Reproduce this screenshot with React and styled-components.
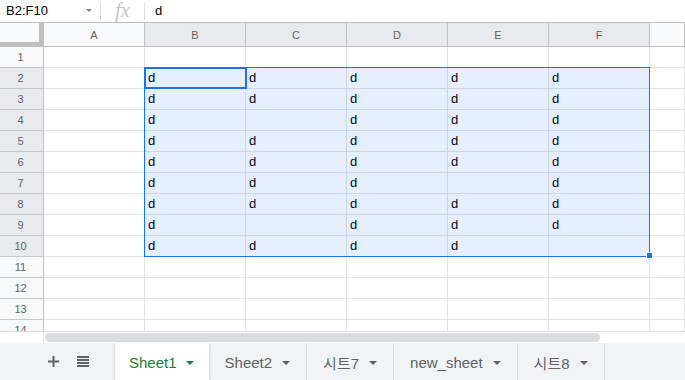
import React from "react";
import styled, { createGlobalStyle } from "styled-components";

const GlobalStyle = createGlobalStyle`
  html, body { margin: 0; padding: 0; background: #fff; }
  body { font-family: "Liberation Sans", Arial, sans-serif; }
  * { box-sizing: border-box; }
`;

const Page = styled.div`
  width: 685px;
  height: 380px;
  overflow: hidden;
  display: flex;
  flex-direction: column;
  background: #fff;
`;

const FormulaBar = styled.div`
  height: 23px;
  flex: none;
  display: flex;
  align-items: center;
  border-bottom: 1px solid #c0c0c0;
  font-size: 13px;
  color: #000;
`;

const NameBox = styled.div`
  width: 100px;
  height: 100%;
  display: flex;
  align-items: center;
  justify-content: space-between;
  padding: 0 8px 1px 6px;
`;

const Caret = styled.span`
  width: 0;
  height: 0;
  border-left: 3px solid transparent;
  border-right: 3px solid transparent;
  border-top: 3px solid #80868b;
`;

const Divider = styled.div`
  width: 1px;
  height: 17px;
  background: #dadce0;
  flex: none;
`;

const Fx = styled.div`
  width: 43px;
  text-align: center;
  font-family: "Liberation Serif", "Times New Roman", serif;
  font-style: italic;
  font-size: 20px;
  color: #c4c7c5;
  line-height: 20px;
  padding-bottom: 3px;
`;

const FormulaText = styled.div`
  padding-left: 10px;
  padding-bottom: 1px;
`;

const Grid = styled.div`
  position: relative;
  flex: none;
`;

const HeaderRow = styled.div`
  display: flex;
  height: 24px;
`;

const Corner = styled.div`
  width: 44px;
  flex: none;
  background: #f8f9fa;
  border-right: 5px solid #c0c0c0;
  border-bottom: 5px solid #c0c0c0;
`;

const ColHeader = styled.div`
  width: ${(p) => (p.$fill ? "auto" : "101px")};
  flex: ${(p) => (p.$fill ? "1" : "none")};
  display: flex;
  align-items: center;
  justify-content: center;
  font-size: 11px;
  color: #5f6368;
  background: ${(p) => (p.$selected ? "#e8eaed" : "#f8f9fa")};
  border-right: 1px solid #c0c0c0;
  border-bottom: 1px solid #c0c0c0;
`;

const Body = styled.div`
  height: 284px;
  overflow: hidden;
`;

const Row = styled.div`
  display: flex;
  height: 21px;
`;

const RowHeader = styled.div`
  width: 44px;
  flex: none;
  display: flex;
  align-items: center;
  justify-content: center;
  padding-right: 2px;
  font-size: 11px;
  color: #5f6368;
  background: ${(p) => (p.$selected ? "#e8eaed" : "#f8f9fa")};
  border-right: 1px solid #c0c0c0;
  border-bottom: 1px solid #c4c7c5;
`;

const Cell = styled.div`
  width: ${(p) => (p.$fill ? "auto" : "101px")};
  flex: ${(p) => (p.$fill ? "1" : "none")};
  padding: 0 3px;
  font-size: 13px;
  line-height: 20px;
  color: #000;
  border-right: 1px solid #e2e3e3;
  border-bottom: 1px solid #e2e3e3;
`;

const Selection = styled.div`
  position: absolute;
  left: 144px;
  top: 44px;
  width: 506px;
  height: 190px;
  border: 1px solid #1a73e8;
  background: rgba(14, 101, 235, 0.1);
  pointer-events: none;
`;

const ActiveCell = styled.div`
  position: absolute;
  left: 144px;
  top: 44px;
  width: 103px;
  height: 22px;
  border: 2px solid #1a73e8;
  pointer-events: none;
`;

const FillHandle = styled.div`
  position: absolute;
  left: 646px;
  top: 229px;
  width: 7px;
  height: 7px;
  background: #1a73e8;
  border: 1px solid #fff;
`;

const ScrollArea = styled.div`
  height: 12px;
  flex: none;
  display: flex;
  border-top: 1px solid #dadce0;
`;

const ScrollCorner = styled.div`
  width: 44px;
  flex: none;
  border-right: 1px solid #e0e0e0;
`;

const Thumb = styled.div`
  margin-top: 1px;
  margin-left: 1px;
  width: 555px;
  height: 9px;
  border-radius: 5px;
  background: #dadce0;
`;

const TabBar = styled.div`
  flex: 1;
  display: flex;
  background: #f1f3f4;
`;

const Tools = styled.div`
  width: 115px;
  flex: none;
  display: flex;
  align-items: center;
  padding-left: 48px;
  gap: 18px;
`;

const IconButton = styled.div`
  display: flex;
  align-items: center;
  color: #5f6368;
`;

const Tab = styled.div`
  display: flex;
  align-items: center;
  gap: ${(p) => (p.$active ? "9px" : "10px")};
  padding: ${(p) => (p.$active ? "1px 14px 0 14px" : "1px 16px 0 16px")};
  font-family: "Liberation Sans", "Noto Sans CJK KR", Arial, sans-serif;
  font-size: 15px;
  color: ${(p) => (p.$active ? "#188038" : "#5f6368")};
  background: ${(p) => (p.$active ? "#fff" : "transparent")};
  box-shadow: ${(p) => (p.$active ? "0 1px 3px rgba(60,64,67,0.3)" : "none")};
  border-right: 1px solid ${(p) => (p.$active ? "transparent" : "#dadce0")};
`;

const TabArrow = styled.span`
  width: 0;
  height: 0;
  border-left: 4px solid transparent;
  border-right: 4px solid transparent;
  border-top: 4px solid ${(p) => (p.$active ? "#188038" : "#5f6368")};
  margin-top: 1px;
`;

const cols = ["A", "B", "C", "D", "E", "F"];
const data = [
  ["", "", "", "", "", ""],
  ["", "d", "d", "d", "d", "d"],
  ["", "d", "d", "d", "d", "d"],
  ["", "d", "", "d", "d", "d"],
  ["", "d", "d", "d", "d", "d"],
  ["", "d", "d", "d", "d", "d"],
  ["", "d", "d", "d", "", "d"],
  ["", "d", "d", "d", "d", "d"],
  ["", "d", "", "d", "d", "d"],
  ["", "d", "d", "d", "d", ""],
  ["", "", "", "", "", ""],
  ["", "", "", "", "", ""],
  ["", "", "", "", "", ""],
  ["", "", "", "", "", ""],
];

const tabs = [
  { name: "Sheet1", active: true },
  { name: "Sheet2" },
  { name: "시트7" },
  { name: "new_sheet" },
  { name: "시트8" },
];

export default function App() {
  return (
    <Page>
      <GlobalStyle />
      <FormulaBar>
        <NameBox>
          <span>B2:F10</span>
          <Caret />
        </NameBox>
        <Divider />
        <Fx>fx</Fx>
        <Divider />
        <FormulaText>d</FormulaText>
      </FormulaBar>
      <Grid>
        <HeaderRow>
          <Corner />
          {cols.map((c) => (
            <ColHeader key={c} $selected={c !== "A"}>
              {c}
            </ColHeader>
          ))}
          <ColHeader $fill />
        </HeaderRow>
        <Body>
          {data.map((row, i) => (
            <Row key={i}>
              <RowHeader $selected={i >= 1 && i <= 9}>{i + 1}</RowHeader>
              {row.map((v, j) => (
                <Cell key={j}>{v}</Cell>
              ))}
              <Cell $fill />
            </Row>
          ))}
        </Body>
        <Selection />
        <ActiveCell />
        <FillHandle />
      </Grid>
      <ScrollArea>
        <ScrollCorner />
        <Thumb />
      </ScrollArea>
      <TabBar>
        <Tools>
          <IconButton>
            <svg width="11" height="11" viewBox="0 0 11 11">
              <rect x="4.5" y="0" width="2" height="11" fill="currentColor" />
              <rect x="0" y="4.5" width="11" height="2" fill="currentColor" />
            </svg>
          </IconButton>
          <IconButton>
            <svg width="12" height="11" viewBox="0 0 12 11">
              <rect x="0" y="0" width="12" height="2" fill="currentColor" />
              <rect x="0" y="3" width="12" height="2" fill="currentColor" />
              <rect x="0" y="6" width="12" height="2" fill="currentColor" />
              <rect x="0" y="9" width="12" height="2" fill="currentColor" />
            </svg>
          </IconButton>
        </Tools>
        {tabs.map((t) => (
          <Tab key={t.name} $active={t.active}>
            <span>{t.name}</span>
            <TabArrow $active={t.active} />
          </Tab>
        ))}
      </TabBar>
    </Page>
  );
}
